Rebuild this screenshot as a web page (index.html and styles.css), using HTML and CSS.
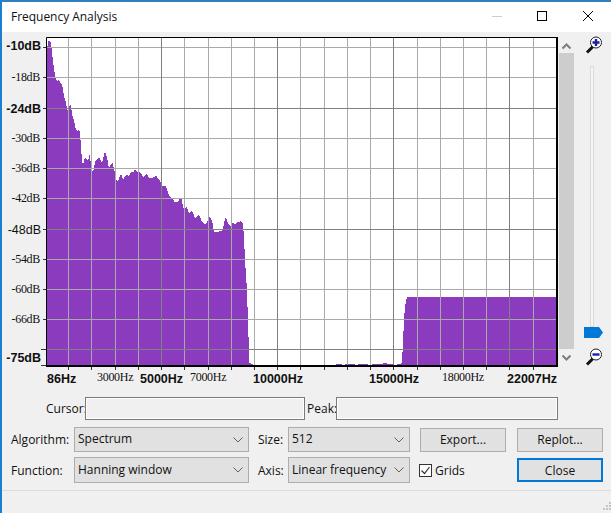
FILE: index.html
```html
<!DOCTYPE html>
<html>
<head>
  <title>Frequency Analysis</title>
  <link rel="stylesheet" href="styles.css">
</head>
<body>
  <div class="window">
    <header class="titlebar">
      <span class="title">Frequency Analysis</span>
      <svg class="caption" width="120" height="30" viewBox="491 2 120 30">
        <path d="M492 16.5h10" stroke="#cccccc" fill="none"/>
        <rect x="537.5" y="11.5" width="9" height="9" stroke="#000" fill="none"/>
        <path d="M583 11l10 10M593 11l-10 10" stroke="#000" fill="none"/>
      </svg>
    </header>

    <div class="chart-row">
      <svg class="plot" width="557" height="360" viewBox="2 32 557 360">
        <rect x="46" y="37" width="512" height="329" fill="#fff"/>

        <!-- spectrum -->
        <polygon class="spectrum" points="47,366 47,50 48,42 49,40 51,43 52,52 53,61 54,69 55,74 56,80 58,81 59,79 60,82 62,85 63,88 64,97 66,102 67,109 68,111 70,105 71,104 72,115 74,120 75,126 76,130 78,131 79,129 80,132 81,147 82,160 83,165 84,161 85,158 87,160 89,158 90,152 91,170 92,169 93,173 95,163 96,160 98,158 100,158 101,162 103,160 104,154 105,152 107,157 108,163 109,168 111,164 112,163 113,164 114,169 116,178 117,181 119,180 120,175 122,175 123,180 124,178 126,175 127,175 129,177 130,173 132,172 134,172 135,169 137,172 139,172 141,173 143,177 145,176 147,173 148,176 149,178 152,178 153,177 157,176 158,179 160,181 162,186 166,186 167,190 169,195 171,198 174,200 174,202 178,202 180,197 182,200 183,208 185,208 187,207 189,214 191,211 193,213 195,218 198,215 200,217 202,222 205,224 207,222 209,217 211,218 213,225 214,232 217,232 220,231 223,230 224,223 226,217 228,223 231,227 232,223 235,224 238,222 241,221 243,224 244,238 245,260 247,290 248,323 249,350 249,363 252,364 253,365 336,365 336,364 342,364 342,365 345,365 345,364 355,364 355,365 358,365 358,364 368,364 368,365 372,365 372,364 383,364 383,363 387,363 387,364 393,364 393,365 397,365 397,364 400,364 402,362 403,342 404,320 405,307 407,297 556,297 556,366"/>

        <!-- grid -->
        <g class="grid">
          <path d="M46 47.5h511M46 77.5h511M46 138.5h511M46 168.5h511M46 198.5h511M46 259.5h511M46 289.5h511M46 319.5h511"/>
          <path d="M68.5 37v329M91.5 37v329M115.5 37v329M138.5 37v329M184.5 37v329M208.5 37v329M231.5 37v329M254.5 37v329M300.5 37v329M324.5 37v329M347.5 37v329M370.5 37v329M417.5 37v329M440.5 37v329M463.5 37v329M486.5 37v329M533.5 37v329"/>
        </g>
        <g class="grid-major">
          <path d="M46 108.5h511M46 229.5h511M46 349.5h511"/>
          <path d="M161.5 37v329M277.5 37v329M393.5 37v329M509.5 37v329"/>
        </g>

        <!-- frame and ticks -->
        <path class="frame" d="M46.5 367V37.5H558"/>
        <path class="frame frame-thick" d="M46 366h512M557 37v330"/>
        <path class="ticks" d="M43 47.5h3M43 77.5h3M43 108.5h3M43 138.5h3M43 168.5h3M43 198.5h3M43 229.5h3M43 259.5h3M43 289.5h3M43 319.5h3M41 349.5h5M41 365.5h5"/>
        <path class="ticks" d="M68.5 367v3M91.5 367v3M115.5 367v3M138.5 367v3M161.5 367v3M184.5 367v3M208.5 367v3M231.5 367v3M254.5 367v3M277.5 367v3M300.5 367v3M324.5 367v3M347.5 367v3M370.5 367v3M393.5 367v3M417.5 367v3M440.5 367v3M463.5 367v3M486.5 367v3M509.5 367v3M533.5 367v3"/>

        <!-- y axis -->
        <g text-anchor="end">
          <text class="bold" x="41" y="50">-10dB</text>
          <text class="thin" x="40" y="81">-18dB</text>
          <text class="bold" x="41" y="113">-24dB</text>
          <text class="thin" x="40" y="142">-30dB</text>
          <text class="thin" x="40" y="172">-36dB</text>
          <text class="thin" x="40" y="202">-42dB</text>
          <text class="plain" x="41" y="234">-48dB</text>
          <text class="thin" x="40" y="263">-54dB</text>
          <text class="thin" x="40" y="293">-60dB</text>
          <text class="thin" x="40" y="323">-66dB</text>
          <text class="bold" x="41" y="362">-75dB</text>
        </g>

        <!-- x axis -->
        <text class="bold" x="47" y="383">86Hz</text>
        <text class="thin" x="97" y="381">3000Hz</text>
        <text class="bold" x="140" y="383">5000Hz</text>
        <text class="thin" x="190" y="381">7000Hz</text>
        <text class="bold" x="253" y="383">10000Hz</text>
        <text class="bold" x="369" y="383">15000Hz</text>
        <text class="thin" x="442" y="381">18000Hz</text>
        <text class="bold" x="507" y="383">22007Hz</text>
      </svg>

      <div class="scrollbar">
        <svg class="chevron" width="15" height="8" viewBox="0 0 15 8"><path d="M3.5 6.5l4-4 4 4" fill="none" stroke="#7d7d7d" stroke-width="2"/></svg>
        <div class="scroll-thumb"></div>
        <svg class="chevron" width="15" height="8" viewBox="0 0 15 8"><path d="M3.5 1.5l4 4 4-4" fill="none" stroke="#7d7d7d" stroke-width="2"/></svg>
      </div>

      <div class="zoom">
        <svg class="zoom-icon" width="18" height="18" viewBox="0 0 18 18">
          <path d="M2 16.5l6-6" stroke="#111" stroke-width="3" fill="none"/>
          <circle cx="11" cy="6.500" r="5.500" fill="#fff" stroke="#222"/>
          <path d="M7.500 6.500h7M11 3v7" stroke="#1c1ca8" stroke-width="2.400" fill="none"/>
        </svg>
        <div class="zoom-track">
          <svg class="zoom-thumb" width="19" height="11" viewBox="0 0 19 11"><path d="M0 0h15l4 5.500-4 5.500H0z" fill="#0078d7"/></svg>
        </div>
        <svg class="zoom-icon" width="18" height="18" viewBox="0 0 18 18">
          <path d="M2 16.500l6-6" stroke="#111" stroke-width="3" fill="none"/>
          <circle cx="11" cy="6.500" r="5.500" fill="#fff" stroke="#222"/>
          <path d="M7.500 6.500h7" stroke="#1c1ca8" stroke-width="2.400" fill="none"/>
        </svg>
      </div>
    </div>

    <div class="readout">
      <label class="readout-label cursor-label">Cursor:</label>
      <div class="textbox cursor-box"></div>
      <label class="readout-label peak-label">Peak:</label>
      <div class="textbox peak-box"></div>
    </div>

    <div class="controls">
      <span class="label">Algorithm:</span>
      <div class="combo combo-wide"><span>Spectrum</span><svg width="10" height="6" viewBox="0 0 10 6"><path d="M0.500 0.500l4.500 4.500 4.500-4.500" fill="none" stroke="#606060"/></svg></div>
      <span class="label label-small">Size:</span>
      <div class="combo combo-small"><span>512</span><svg width="10" height="6" viewBox="0 0 10 6"><path d="M0.500 0.500l4.500 4.500 4.500-4.500" fill="none" stroke="#606060"/></svg></div>
      <div class="button export">Export...</div>
      <div class="button replot">Replot...</div>

      <span class="label">Function:</span>
      <div class="combo combo-wide"><span>Hanning window</span><svg width="10" height="6" viewBox="0 0 10 6"><path d="M0.500 0.500l4.500 4.500 4.500-4.500" fill="none" stroke="#606060"/></svg></div>
      <span class="label label-small">Axis:</span>
      <div class="combo combo-small"><span>Linear frequency</span><svg width="10" height="6" viewBox="0 0 10 6"><path d="M0.500 0.500l4.500 4.500 4.500-4.500" fill="none" stroke="#606060"/></svg></div>
      <div class="check">
        <svg width="13" height="13" viewBox="0 0 13 13"><rect x="0.500" y="0.500" width="12" height="12" fill="#fff" stroke="#333"/><path d="M2.500 6.500l3 3 5-6.500" fill="none" stroke="#333" stroke-width="1.200"/></svg>
        <span>Grids</span>
      </div>
      <div class="button close">Close</div>
    </div>

    <div class="statusbar">
      <svg class="grip" width="10" height="10" viewBox="0 0 10 10"><path d="M8 1h2v2H8zM5 4h2v2H5zM8 4h2v2H8zM2 7h2v2H2zM5 7h2v2H5zM8 7h2v2H8z" fill="#c4c4c4"/></svg>
    </div>
  </div>
</body>
</html>
```

FILE: styles.css
```css
body {
  margin: 0;
  font-family: "Open Sans", "Noto Sans", sans-serif;
  font-size: 12px;
  color: #111;
  overflow: hidden;
}

.window {
  width: 609px;
  height: 511px;
  border-top: 2px solid #2f80c0;
  border-left: 2px solid #1a7fd0;
  background: #f0f0f0;
  display: flex;
  flex-direction: column;
}

.titlebar {
  height: 30px;
  background: #fff;
  display: flex;
  justify-content: space-between;
  align-items: center;
  flex: none;
}
.title {
  margin-left: 9px;
  margin-top: -1px;
  letter-spacing: -0.03px;
}
.caption {
  display: block;
}

/* chart */
.chart-row {
  display: flex;
  height: 360px;
  flex: none;
}
.plot {
  display: block;
  flex: none;
}
.spectrum {
  fill: #8b3cbe;
  shape-rendering: crispEdges;
}
.grid path {
  stroke: #a9a9a9;
  fill: none;
}
.grid-major path {
  stroke: #808080;
  fill: none;
}
.frame {
  stroke: #000;
  fill: none;
}
.frame-thick {
  stroke-width: 2;
}
.ticks {
  stroke: #333;
  fill: none;
}
.plot text {
  fill: #111;
}
.bold {
  font-family: "Liberation Sans", sans-serif;
  font-size: 12.5px;
  font-weight: bold;
}
.plain {
  font-family: "Liberation Sans", sans-serif;
  font-size: 12.5px;
}
.thin {
  font-family: "Liberation Serif", serif;
  font-size: 12px;
  letter-spacing: -0.3px;
}

.scrollbar {
  width: 15px;
  height: 320px;
  margin-top: 10px;
  display: flex;
  flex-direction: column;
  align-items: center;
}
.scroll-thumb {
  width: 15px;
  flex: 1;
  margin: 3px 0 5px;
  background: #cdcdcd;
}
.chevron {
  display: block;
  flex: none;
}

.zoom {
  width: 30px;
  margin-left: 3px;
  padding-top: 4px;
  height: 340px;
  display: flex;
  flex-direction: column;
  align-items: center;
}
.zoom-icon {
  display: block;
  flex: none;
  margin-left: 4px;
}
.zoom-track {
  position: relative;
  width: 2px;
  height: 259px;
  margin: 12px 0 21px;
  flex: none;
  background: #f5f5f5;
  border: 1px solid #d8dbd8;
}
.zoom-thumb {
  position: absolute;
  left: -7px;
  top: 260px;
}

/* cursor and peak */
.readout {
  display: flex;
  align-items: center;
  height: 23px;
  margin-top: 5px;
  flex: none;
}
.readout-label {
  flex: none;
}
.cursor-label {
  width: 39px;
  margin-left: 44px;
}
.peak-label {
  width: 29px;
  margin-left: 2px;
}
.textbox {
  height: 21px;
  background: #f0f0f0;
  border: 1px solid #7a7a7a;
  box-shadow: inset 0 0 0 1px #fff;
}
.cursor-box {
  width: 218px;
}
.peak-box {
  width: 220px;
}

/* combos and buttons */
.controls {
  display: grid;
  grid-template-columns: 63px 175px 39px 122px 86px 86px;
  grid-template-rows: 25px 26px;
  column-gap: 0;
  row-gap: 5px;
  margin: 7px 0 0 9px;
  flex: none;
  align-items: center;
}
.label-small {
  padding-left: 9px;
}
.combo {
  display: flex;
  align-items: center;
  justify-content: space-between;
  box-sizing: border-box;
  height: 100%;
  padding: 0 5px 2px 3px;
  background: #e1e1e1;
  border: 1px solid #adadad;
}
.combo svg {
  flex: none;
  margin-top: 2px;
}
.combo-small {
  overflow: hidden;
}
.button {
  box-sizing: border-box;
  height: 24px;
  width: 86px;
  display: flex;
  align-items: center;
  justify-content: center;
  background: #e1e1e1;
  border: 1px solid #adadad;
}
.export {
  margin-left: 10px;
}
.replot,
.close {
  margin-left: 21px;
}
.close {
  border: 2px solid #0078d7;
}
.check {
  display: flex;
  align-items: center;
  gap: 3px;
  margin-left: 9px;
}
.check svg {
  display: block;
  flex: none;
}

.statusbar {
  flex: 1;
  margin-top: 7px;
  border-top: 1px solid #dcdcdc;
  position: relative;
}
.grip {
  position: absolute;
  right: 0;
  bottom: 2px;
}
```
